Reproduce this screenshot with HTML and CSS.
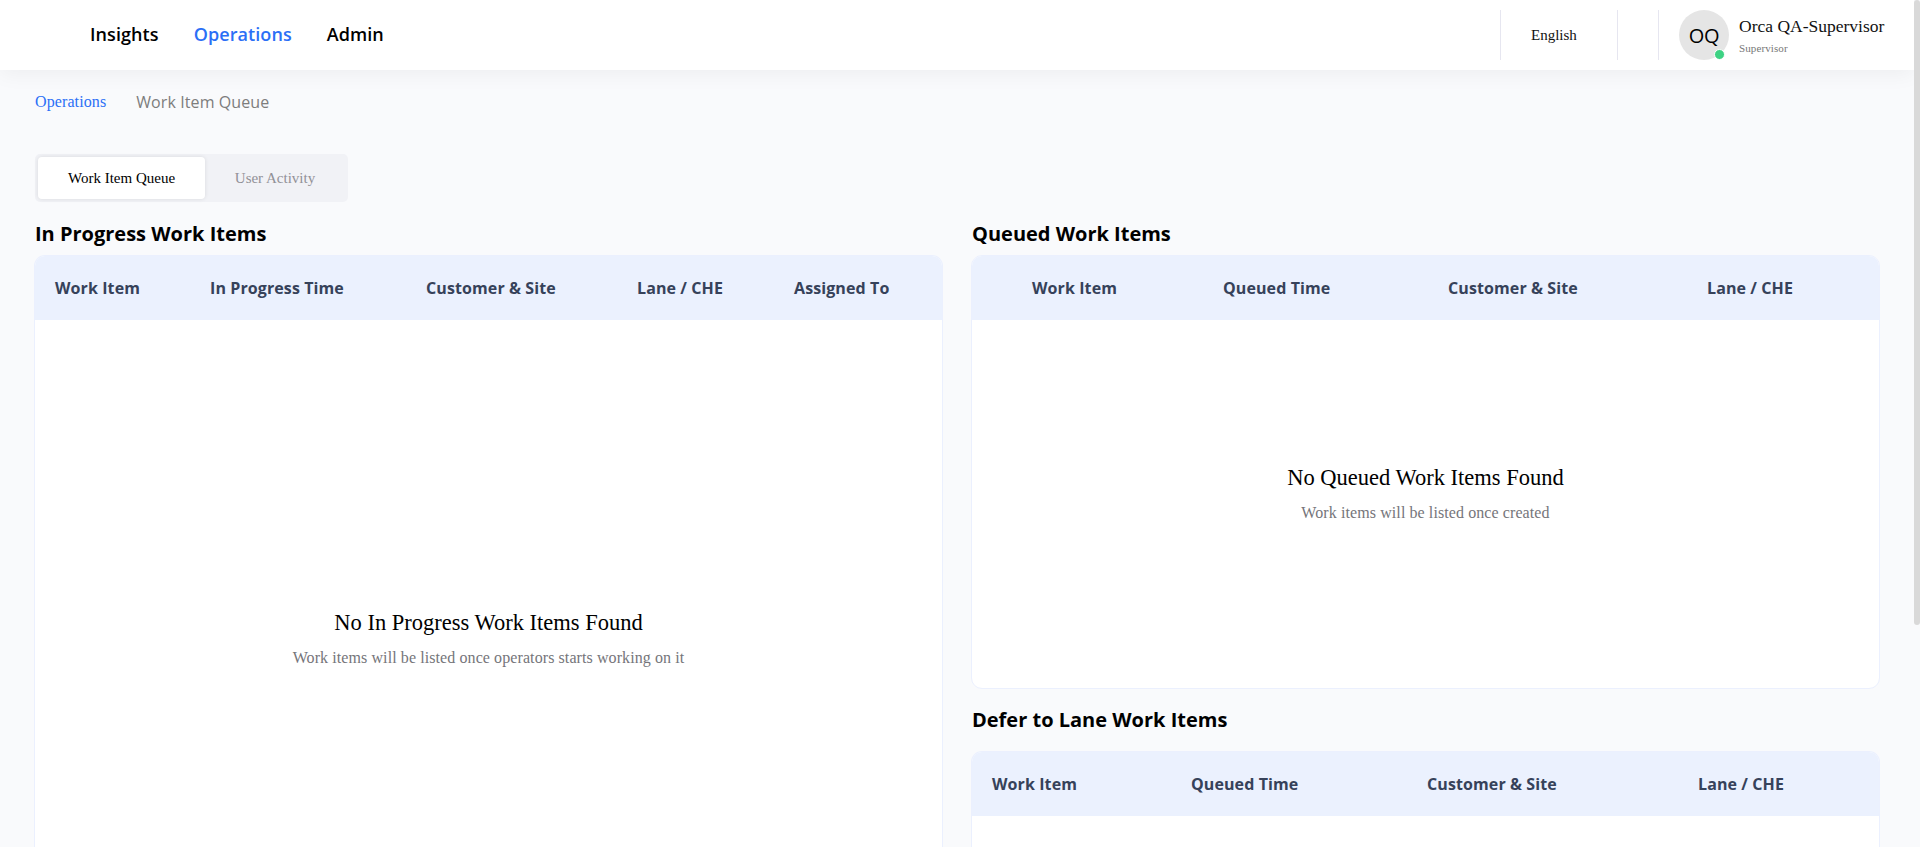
FILE: index.html
```html
<!DOCTYPE html>
<html lang="en">
<head>
<meta charset="utf-8">
<title>Work Item Queue</title>
<link rel="stylesheet" href="styles.css">
</head>
<body>
<header class="topbar">
  <nav class="nav">
    <a class="nav-link">Insights</a>
    <a class="nav-link nav-link-active">Operations</a>
    <a class="nav-link">Admin</a>
  </nav>
  <div class="tools">
    <div class="language">English</div>
    <div class="notifications"></div>
    <div class="user">
      <div class="avatar">OQ<span class="status"></span></div>
      <div class="user-text">
        <div class="user-name">Orca QA-Supervisor</div>
        <div class="user-role">Supervisor</div>
      </div>
    </div>
  </div>
</header>
<main class="page">
  <div class="breadcrumb">
    <a class="crumb-link">Operations</a>
    <span class="crumb-current">Work Item Queue</span>
  </div>
  <div class="tabs">
    <button class="tab tab-active">Work Item Queue</button>
    <button class="tab">User Activity</button>
  </div>
  <div class="columns">
    <section class="column">
      <h2 class="title">In Progress Work Items</h2>
      <div class="panel panel-tall">
        <div class="head head-progress">
          <span>Work Item</span><span>In Progress Time</span><span>Customer &amp; Site</span><span>Lane / CHE</span><span>Assigned To</span>
        </div>
        <div class="empty empty-tall">
          <div class="empty-title">No In Progress Work Items Found</div>
          <div class="empty-text">Work items will be listed once operators starts working on it</div>
        </div>
      </div>
    </section>
    <section class="column">
      <h2 class="title">Queued Work Items</h2>
      <div class="panel panel-queued">
        <div class="head head-queued">
          <span>Work Item</span><span>Queued Time</span><span>Customer &amp; Site</span><span>Lane / CHE</span>
        </div>
        <div class="empty">
          <div class="empty-title">No Queued Work Items Found</div>
          <div class="empty-text">Work items will be listed once created</div>
        </div>
      </div>
      <h2 class="title title-defer">Defer to Lane Work Items</h2>
      <div class="panel panel-defer">
        <div class="head head-defer">
          <span>Work Item</span><span>Queued Time</span><span>Customer &amp; Site</span><span>Lane / CHE</span>
        </div>
      </div>
    </section>
  </div>
</main>
<div class="scroll-thumb"></div>
</body>
</html>
```

FILE: styles.css
```css
* { box-sizing: border-box; }

body {
  margin: 0;
  height: 847px;
  overflow: hidden;
  background: #f9fafc;
  color: #000;
  font-family: "Liberation Serif", "Times New Roman", serif;
}

.topbar {
  display: flex;
  justify-content: space-between;
  width: 1914px;
  height: 70px;
  padding: 10px 20px 10px 90px;
  background: #fff;
  box-shadow: 0 4px 20px rgba(0, 0, 0, 0.05);
}

.nav {
  display: flex;
  align-items: center;
  gap: 35px;
  padding-bottom: 2px;
  font: 600 18px/24px "Open Sans", sans-serif;
  letter-spacing: 0.08px;
}

.nav-link-active { color: #2b6ff6; }

.tools { display: flex; }

.language {
  width: 117px;
  padding-left: 30px;
  border-left: 1px solid #e6e6f0;
  font-size: 15px;
  line-height: 50px;
  color: #111;
}

.notifications {
  width: 42px;
  border: solid #e6e6f0;
  border-width: 0 1px;
}

.user {
  display: flex;
  gap: 10px;
  padding-left: 20px;
}

.avatar {
  position: relative;
  width: 50px;
  height: 50px;
  border-radius: 50%;
  background: #e5e5e5;
  font: 20px/52px "Open Sans", sans-serif;
  letter-spacing: -0.3px;
  text-align: center;
}

.status {
  position: absolute;
  right: 4px;
  bottom: 0;
  width: 11px;
  height: 11px;
  border: 1px solid #fff;
  border-radius: 50%;
  background: #3dd283;
}

.user-text {
  width: 155px;
  padding-top: 6px;
}

.user-name {
  font-size: 17.5px;
  line-height: 20px;
  white-space: nowrap;
  color: #111;
}

.user-role {
  margin-top: 5px;
  font-size: 11px;
  line-height: 14px;
  letter-spacing: 0.1px;
  color: #777;
}

.page { padding: 20px 34px 0; }

.breadcrumb {
  display: flex;
  gap: 30px;
  align-items: center;
  height: 24px;
  padding-left: 1px;
  font-size: 16px;
  line-height: 24px;
  letter-spacing: 0.1px;
}

.crumb-link { color: #2b6ff6; }

.crumb-current {
  font-family: "Open Sans", sans-serif;
  color: #7d7d7d;
}

.tabs {
  display: flex;
  width: 313px;
  height: 48px;
  margin: 40px 0 0 1px;
  padding: 3px;
  border-radius: 5px;
  background: #f1f2f6;
}

.tab {
  flex: 1;
  padding: 0;
  border: 0;
  border-radius: 4px;
  background: none;
  font: 15px/42px "Liberation Serif", serif;
  color: #919196;
}

.tab-active {
  flex: 0 0 167px;
  background: #fff;
  box-shadow: 0 0 4px rgba(0, 0, 0, 0.1);
  color: #000;
}

.columns {
  display: grid;
  grid-template-columns: 909px 909px;
  gap: 28px;
  padding-top: 19px;
}

.title {
  margin: 0 0 8px;
  padding-left: 1px;
  font: 700 20px/26px "Open Sans", sans-serif;
}

.title-defer { margin: 18px 0; }

.panel {
  overflow: hidden;
  border: 1px solid #ebf0fe;
  border-radius: 11px;
  background: #fff;
}

/* These two panels continue below the fold. */
.panel-tall,
.panel-defer {
  border-bottom: 0;
  border-radius: 11px 11px 0 0;
}

.panel-tall { height: 592px; }

.panel-queued { height: 434px; }

.panel-defer { height: 96px; }

.head {
  display: grid;
  height: 64px;
  padding-left: 20px;
  background: #ebf1fe;
  font: 700 16px/64px "Open Sans", sans-serif;
  letter-spacing: 0.1px;
  white-space: nowrap;
  color: #36425a;
}

.head-progress { grid-template-columns: 155px 216px 211px 157px 1fr; }

.head-queued {
  grid-template-columns: 191px 225px 259px 1fr;
  padding-left: 60px;
}

.head-defer { grid-template-columns: 199px 236px 271px 1fr; }

.empty {
  padding-top: 145px;
  text-align: center;
}

.empty-tall { padding-top: 290px; }

.empty-title {
  font-size: 22.5px;
  line-height: 26px;
}

.empty-text {
  margin-top: 12px;
  font-size: 16px;
  line-height: 20px;
  letter-spacing: 0.09px;
  color: #75757a;
}

.scroll-thumb {
  position: fixed;
  top: 0;
  right: 0;
  width: 6px;
  height: 625px;
  border-radius: 3px;
  background: #d9d9d9;
}
```
